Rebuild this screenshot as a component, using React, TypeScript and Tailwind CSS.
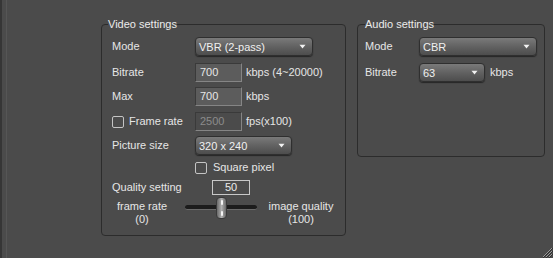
import React from "react";

const Arrow = () => (
  <svg width="7" height="5" viewBox="0 0 7 5" className="shrink-0">
    <path d="M0.5 0.8 H6.5 L3.5 4.5 Z" fill="#f2f2f2" />
  </svg>
);

const Dropdown = ({ w, value }: { w: string; value: string }) => (
  <div
    className={`${w} h-[19px] rounded-[4px] border border-[#2f2f2f] bg-gradient-to-b from-[#7a7a7a] via-[#626262] to-[#4d4d4d] shadow-[0_1px_1px_#262626] flex items-center justify-between pl-[3px] pr-[6px] text-[#f0f0f0]`}
  >
    <span className="pt-[1px]">{value}</span>
    <Arrow />
  </div>
);

const Input = ({ value, disabled }: { value: string; disabled?: boolean }) => (
  <div
    className={`w-[47px] h-[19px] border border-t-[#3a3a3a] border-l-[#3a3a3a] border-b-[#858585] border-r-[#858585] flex items-center pl-[4px] ${
      disabled ? "bg-[#4b4b4b] text-[#8c8c8c]" : "bg-[#5c5c5c] text-[#e6e6e6]"
    }`}
  >
    {value}
  </div>
);

const Check = () => (
  <div className="w-[12px] h-[12px] rounded-[2px] border border-[#c4c4c4] shrink-0" />
);

export default function App() {
  return (
    <div
      className="relative w-[553px] h-[258px] bg-[#4b4b4b] flex text-[11px] leading-[13px] text-[#e6e6e6] overflow-hidden"
      style={{ fontFamily: '"Liberation Sans", Arial, sans-serif' }}
    >
      <div className="w-[2px] h-full bg-[#363636]" />
      <div className="w-[4px] h-full" />
      <div className="w-[1px] h-full bg-[#565656]" />

      <div className="flex items-start pt-[18px] ml-[94px]">
        {/* Video settings */}
        <fieldset className="w-[245px] h-[218px] border border-[#2c2c2c] rounded-[4px] p-0 m-0">
          <legend className="ml-[6px] p-0 leading-[13px] text-[#ececec]">Video settings</legend>
          <div className="pt-[6px] pl-[10px] flex flex-col">
            <div className="flex items-center h-[19px]">
              <div className="w-[83px]">Mode</div>
              <Dropdown w="w-[118px]" value="VBR (2-pass)" />
            </div>
            <div className="flex items-center h-[19px] mt-[7px]">
              <div className="w-[83px]">Bitrate</div>
              <Input value="700" />
              <div className="ml-[4px]">kbps (4~20000)</div>
            </div>
            <div className="flex items-center h-[19px] mt-[5px]">
              <div className="w-[83px]">Max</div>
              <Input value="700" />
              <div className="ml-[4px]">kbps</div>
            </div>
            <div className="flex items-center h-[19px] mt-[6px]">
              <div className="w-[83px] flex items-center">
                <Check />
                <span className="ml-[5px]">Frame rate</span>
              </div>
              <Input value="2500" disabled />
              <div className="ml-[4px]">fps(x100)</div>
            </div>
            <div className="flex items-center h-[19px] mt-[5px]">
              <div className="w-[83px]">Picture size</div>
              <Dropdown w="w-[97px]" value="320 x 240" />
            </div>
            <div className="flex items-center h-[13px] mt-[6px] pl-[83px]">
              <Check />
              <span className="ml-[6px]">Square pixel</span>
            </div>
            <div className="flex items-center h-[15px] mt-[6px]">
              <div className="w-[100px]">Quality setting</div>
              <div className="w-[38px] h-[15px] border border-[#c8c8c8] flex items-center justify-center text-[#ececec]">
                50
              </div>
            </div>
            <div className="flex items-start mt-[5px]">
              <div className="w-[60px] text-center leading-[12.5px] whitespace-nowrap">
                <div>frame rate</div>
                <div>(0)</div>
              </div>
              <div className="relative ml-[13px] w-[72px] h-[25px]">
                <div className="absolute left-0 right-0 top-[5px] h-[5px] rounded-full bg-[#1c1c1c] border-b border-[#6a6a6a]" />
                <div className="absolute left-[31px] top-[-3px] w-[11px] h-[22px] rounded-[4px] bg-gradient-to-r from-[#6a6a6a] via-[#b0b0b0] to-[#6a6a6a] border border-[#3a3a3a] flex flex-col items-center justify-between py-[2px]">
                  <div className="w-[2px] h-[5px] rounded-full bg-[#f5f5f5]" />
                  <div className="w-[2px] h-[5px] rounded-full bg-[#f5f5f5]" />
                </div>
              </div>
              <div className="ml-[9px] w-[70px] text-center leading-[12.5px] whitespace-nowrap">
                <div>image quality</div>
                <div>(100)</div>
              </div>
            </div>
          </div>
        </fieldset>

        {/* Audio settings */}
        <fieldset className="ml-[11px] w-[188px] h-[139px] border border-[#2c2c2c] rounded-[4px] p-0 m-0">
          <legend className="ml-[7px] p-0 leading-[13px] text-[#ececec]">Audio settings</legend>
          <div className="pt-[6px] pl-[7px] flex flex-col">
            <div className="flex items-center h-[19px]">
              <div className="w-[54px]">Mode</div>
              <Dropdown w="w-[118px]" value="CBR" />
            </div>
            <div className="flex items-center h-[19px] mt-[7px]">
              <div className="w-[54px]">Bitrate</div>
              <Dropdown w="w-[66px]" value="63" />
              <div className="ml-[5px]">kbps</div>
            </div>
          </div>
        </fieldset>
      </div>

      <svg className="absolute right-0 bottom-0" width="12" height="12" viewBox="0 0 12 12">
        <path d="M11 2 L2 11 M11 5 L5 11 M11 8 L8 11" stroke="#9a9a9a" strokeWidth="1" />
        <path d="M12 2 L2 12 M12 5 L5 12 M12 8 L8 12" stroke="#2e2e2e" strokeWidth="1" />
      </svg>
    </div>
  );
}
